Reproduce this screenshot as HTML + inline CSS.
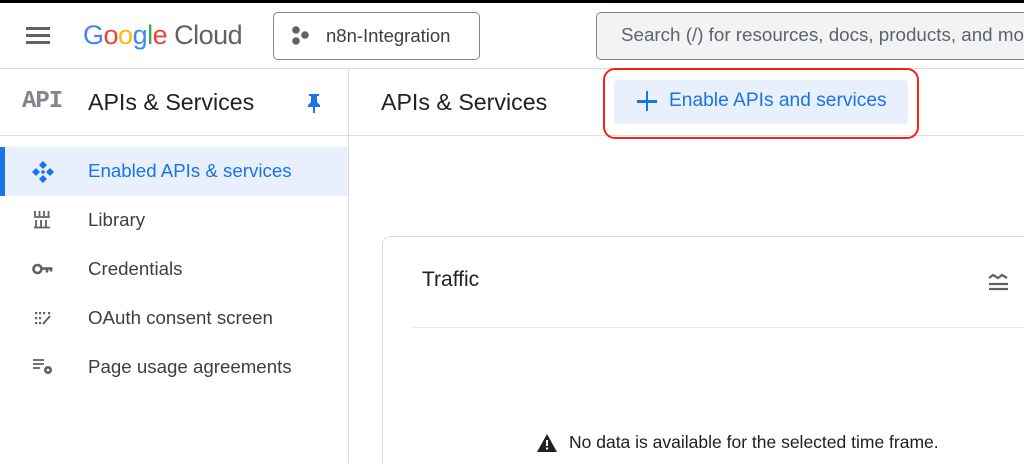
<!DOCTYPE html>
<html style="overflow:hidden;height:463px"><head><meta charset="utf-8"><style>
*{box-sizing:border-box;margin:0;padding:0}
body{width:1024px;height:463px;overflow:hidden;background:#fff;font-family:"Liberation Sans",Arial,sans-serif;color:#202124;position:relative}
.a{position:absolute}
.nav{font-size:18.7px;color:#3c4043}
</style></head><body>
<div class="a" style="left:0;top:0;width:1024px;height:3px;background:#000"></div>
<div class="a" style="left:26px;top:27px;width:24px;height:3px;background:#5f6368"></div>
<div class="a" style="left:26px;top:34px;width:24px;height:3px;background:#5f6368"></div>
<div class="a" style="left:26px;top:41px;width:24px;height:3px;background:#5f6368"></div>
<div class="a" style="left:83px;top:20px;font-size:27px;letter-spacing:-0.5px"><span style="color:#4285f4">G</span><span style="color:#ea4335">o</span><span style="color:#fbbc05">o</span><span style="color:#4285f4">g</span><span style="color:#34a853">l</span><span style="color:#ea4335">e</span> <span style="color:#5f6368">Cloud</span></div>
<div class="a" style="left:273px;top:12px;width:207px;height:48px;border:1px solid #80868b;border-radius:5px"></div>
<svg class="a" style="left:291px;top:25px" width="22" height="22"><circle cx="5" cy="5" r="3.8" fill="#5f6368"/><circle cx="14" cy="10" r="3.8" fill="#5f6368"/><circle cx="5" cy="16" r="3.8" fill="#5f6368"/></svg>
<div class="a" style="left:326px;top:25px;font-size:18.5px;color:#3c4043">n8n-Integration</div>
<div class="a" style="left:596px;top:12px;width:440px;height:48px;background:#f1f3f4;border:1px solid #80868b;border-radius:5px"></div>
<div class="a" style="left:621px;top:24px;font-size:18.8px;color:#5f6368;white-space:nowrap">Search (/) for resources, docs, products, and more</div>
<div class="a" style="left:0;top:68px;width:1024px;height:1px;background:#dadce0"></div>
<div class="a" style="left:0;top:135px;width:1024px;height:1px;background:#dadce0"></div>
<div class="a" style="left:348px;top:69px;width:1px;height:394px;background:#dadce0"></div>
<div class="a" style="left:22px;top:88px;font-family:'Liberation Mono',monospace;font-weight:bold;font-size:24px;color:#80868b;letter-spacing:-1px">API</div>
<div class="a" style="left:88px;top:89px;font-size:23.2px;color:#202124">APIs &amp; Services</div>
<svg class="a" style="left:306px;top:93px" width="16" height="22"><path d="M3 1h10v2h-2v6l3 3v2H9v6H7v-6H2v-2l3-3V3H3z" fill="#1a73e8"/></svg>
<div class="a" style="left:381px;top:89px;font-size:23.2px;color:#202124">APIs &amp; Services</div>
<div class="a" style="left:603px;top:68px;width:316px;height:71px;border:2px solid #f0241a;border-radius:12px"></div>
<div class="a" style="left:614px;top:80px;width:294px;height:44px;background:#e8f0fe;border-radius:4px"></div>
<div class="a" style="left:637px;top:100px;width:20px;height:2.5px;background:#1a73e8"></div>
<div class="a" style="left:645.7px;top:91px;width:2.5px;height:20px;background:#1a73e8"></div>
<div class="a" style="left:669px;top:90px;font-size:19.2px;color:#1a73e8">Enable APIs and services</div>
<!-- sidebar -->
<div class="a" style="left:0;top:147px;width:348px;height:49px;background:#e8f0fe"></div>
<div class="a" style="left:0;top:147px;width:5px;height:49px;background:#1a73e8"></div>
<svg class="a" style="left:31px;top:160px" width="24" height="24"><path d="M12 1l4 4-4 4-4-4zM12 15l4 4-4 4-4-4zM1 12l4-4 4 4-4 4zM15 12l4-4 4 4-4 4z" fill="#1a73e8"/><circle cx="12" cy="12" r="1.8" fill="#1a73e8"/></svg>
<div class="a nav" style="left:88px;top:160px;color:#1a73e8">Enabled APIs &amp; services</div>
<svg class="a" style="left:34px;top:210px" width="18" height="19"><path d="M1 1v5M5.5 1v5M10 1v5M14.5 1v5M0 7h16M2 10v7M7 10v7M12 10v7M0 17.5h16" stroke="#5f6368" stroke-width="1.8" fill="none"/></svg>
<div class="a nav" style="left:88px;top:209px">Library</div>
<svg class="a" style="left:32px;top:262px" width="22" height="14"><circle cx="5.5" cy="7" r="4" stroke="#5f6368" stroke-width="2.6" fill="none"/><path d="M9.5 6.5h11M15 6.5v4M19 6.5v3" stroke="#5f6368" stroke-width="2.6" fill="none"/></svg>
<div class="a nav" style="left:88px;top:258px">Credentials</div>
<svg class="a" style="left:35px;top:311px" width="18" height="16" fill="#5f6368"><rect x="0" y="1" width="2.2" height="2.2"/><rect x="4" y="1" width="2.2" height="2.2"/><rect x="8" y="1" width="2.2" height="2.2"/><rect x="13" y="1" width="2.2" height="2.2"/><rect x="0" y="6" width="2.2" height="2.2"/><rect x="4" y="6" width="2.2" height="2.2"/><rect x="0" y="11" width="2.2" height="2.2"/><rect x="4" y="11" width="2.2" height="2.2"/><path d="M8 13l7-8" stroke="#5f6368" stroke-width="2"/></svg>
<div class="a nav" style="left:88px;top:307px">OAuth consent screen</div>
<svg class="a" style="left:33px;top:358px" width="22" height="18"><path d="M0 2h11M0 6h11M0 10h7" stroke="#5f6368" stroke-width="1.8"/><circle cx="15" cy="12" r="4" fill="#5f6368"/><circle cx="15" cy="12" r="1.3" fill="#fff"/></svg>
<div class="a nav" style="left:88px;top:356px">Page usage agreements</div>
<!-- card -->
<div class="a" style="left:382px;top:236px;width:700px;height:240px;border:1px solid #dadce0;border-radius:8px"></div>
<div class="a" style="left:422px;top:268px;font-size:21px;color:#202124">Traffic</div>
<svg class="a" style="left:987px;top:270px" width="22" height="22"><path d="M2 8l4-3 5 3 4-3 5 3M2 14h19M2 19h19" stroke="#5f6368" stroke-width="2.2" fill="none"/></svg>
<div class="a" style="left:413px;top:327px;width:611px;height:1px;background:#e8eaed"></div>
<svg class="a" style="left:536px;top:433px" width="22" height="20"><path d="M11 1L21 19H1z" fill="#202124"/><rect x="10" y="7" width="2" height="6" fill="#fff"/><rect x="10" y="14.5" width="2" height="2" fill="#fff"/></svg>
<div class="a" style="left:569px;top:432px;font-size:17.5px;color:#202124">No data is available for the selected time frame.</div>
</body></html>
